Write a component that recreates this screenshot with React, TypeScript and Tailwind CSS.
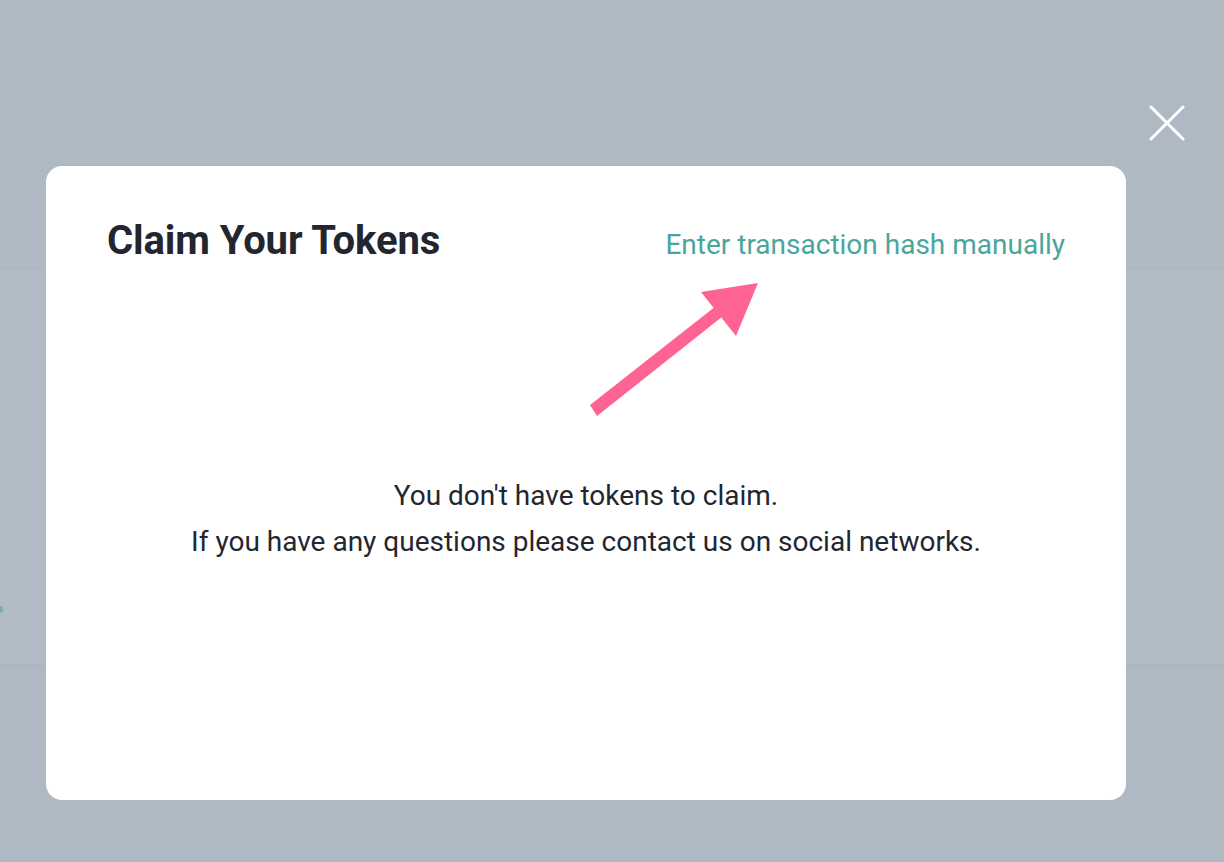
export default function App() {
    return (
        <main className="relative w-[1224px] h-[862px] overflow-hidden bg-[#afb9c4] font-['Roboto',sans-serif] flex flex-col pt-[105px]">

            {/* page behind the overlay */}
            <div className="absolute left-0 right-0 top-[268px] h-[397px] bg-[#b1bbc5] border-y border-[#aab4bf]" />
            <div className="absolute left-[-4px] top-[606px] w-[7px] h-[7px] rounded-full bg-[#7fa9b0]" />

            {/* close button */}
            <button className="relative self-end mr-[39px] w-9 h-9 flex items-center justify-center">
                <svg width="36" height="36" viewBox="0 0 36 36" fill="none">
                    <path d="M2 2L34 34M34 2L2 34" stroke="white" strokeWidth="3" strokeLinecap="round" />
                </svg>
            </button>

            {/* modal */}
            <div className="relative ml-[46px] mt-[25px] w-[1080px] h-[634px] bg-white rounded-2xl px-[61px] pt-[51px]">
                <div className="flex justify-between items-baseline">
                    <h1 className="text-[40px] font-bold text-[#23262f] leading-[48px] tracking-[-0.1px]">Claim Your Tokens</h1>
                    <a className="text-[28px] text-[#4aa69c] leading-[48px] cursor-pointer">Enter transaction hash manually</a>
                </div>

                <div className="mt-[204px] text-center text-[28px] leading-[46px] text-[#23262f]">
                    <p>You don't have tokens to claim.</p>
                    <p>If you have any questions please contact us on social networks.</p>
                </div>
            </div>

            {/* annotation arrow */}
            <svg className="absolute left-0 top-0 pointer-events-none" width="1224" height="862">
                <path d="M590 405L730 295L737 305L597 416Z" fill="#ff6392" />
                <path d="M701 292L758 283L736 336Z" fill="#ff6392" />
            </svg>
        </main>
    );
}
